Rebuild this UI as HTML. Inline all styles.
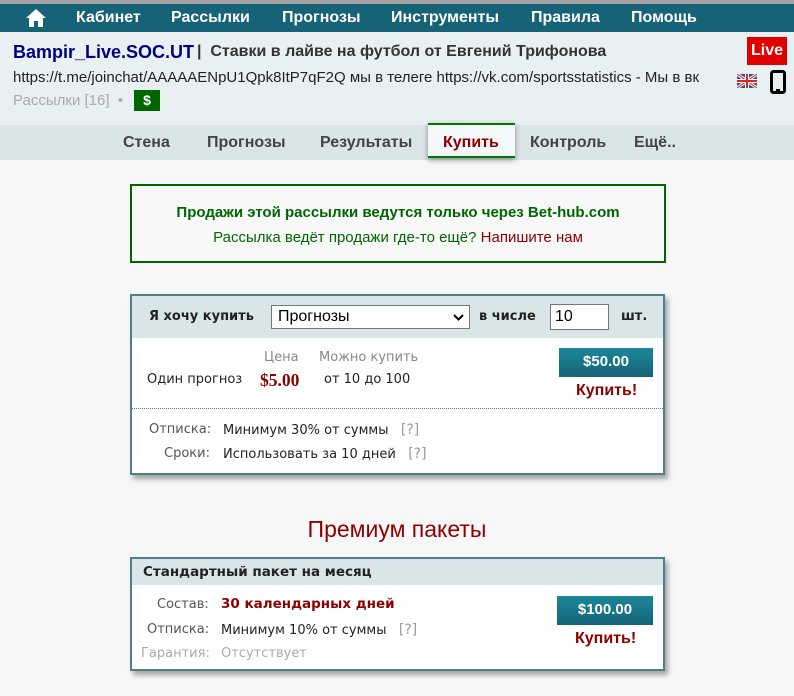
<!DOCTYPE html>
<html><head><meta charset="utf-8"><style>
*{box-sizing:border-box;margin:0;padding:0}
body{width:794px;height:696px;overflow:hidden;background:#f7f7f7;font-family:"Liberation Sans",Arial,sans-serif;position:relative}
.abs{position:absolute;white-space:nowrap}
#top{position:absolute;left:0;top:0;width:794px;height:4px;background:#a4a4a4}
#nav{position:absolute;left:0;top:4px;width:794px;height:28px;background:#166378}
#nav .i{position:absolute;top:5px;color:#fff;font-weight:bold;font-size:16px}
#hdr{position:absolute;left:0;top:32px;width:794px;height:93px;background:#e8f0f2}
#tabs{position:absolute;left:0;top:125px;width:794px;height:35px;background:#dae5e7}
.tab{position:absolute;top:9px;font-weight:bold;font-size:16px;color:#444}
.v{font-family:"DejaVu Sans",Verdana,sans-serif;font-size:13px}
.panel{position:absolute;left:130px;width:535px;border:2px solid #4d8088;background:#fff;box-shadow:3px 4px 5px rgba(0,0,0,.35)}
.btn{position:absolute;background:linear-gradient(#1b8798,#166378);color:#fff;font-weight:bold;font-size:15px;text-align:center;line-height:28px}
.buy{position:absolute;color:#8b0000;font-weight:bold;font-size:16px}
</style></head><body>
<div id="top"></div>
<div id="nav">
<svg style="position:absolute;left:25px;top:4px" width="22" height="20" viewBox="0 0 22 20"><path d="M11 1 L1 10 H4 V19 H9 V13 H13 V19 H18 V10 H21 Z" fill="#fff"/></svg>
<span class="i" style="left:76px">Кабинет</span>
<span class="i" style="left:171px">Рассылки</span>
<span class="i" style="left:282px">Прогнозы</span>
<span class="i" style="left:391px">Инструменты</span>
<span class="i" style="left:531px">Правила</span>
<span class="i" style="left:631px">Помощь</span>
</div>
<div id="hdr">
<span class="abs" style="left:13px;top:10px;font-size:18px;font-weight:bold;color:#000080">Bampir_Live.SOC.UT</span>
<span class="abs" style="left:197px;top:11px;font-size:16px;font-weight:bold;color:#333">|&nbsp; Ставки в лайве на футбол от Евгений Трифонова</span>
<span class="abs" style="left:13px;top:37px;font-size:15px;color:#222">https://t.me/joinchat/AAAAAENpU1Qpk8ItP7qF2Q мы в телеге https://vk.com/sportsstatistics - Мы в вк</span>
<span class="abs" style="left:13px;top:60px;font-size:15px;color:#aaa">Рассылки [16] &nbsp;•</span>
<div class="abs" style="left:134px;top:58px;width:26px;height:21px;background:#006600;color:#fff;font-weight:bold;font-size:14px;text-align:center;line-height:21px">$</div>
<div class="abs" style="left:747px;top:5px;width:40px;height:28px;background:#e00000;color:#fff;font-weight:bold;font-size:16px;text-align:center;line-height:28px">Live</div>
<svg style="position:absolute;left:737px;top:42px" width="20" height="14" viewBox="0 0 20 14"><rect width="20" height="14" fill="#3a4f9a"/><path d="M0 0L20 14M20 0L0 14" stroke="#fff" stroke-width="3"/><path d="M0 0L20 14M20 0L0 14" stroke="#d22" stroke-width="1"/><path d="M10 0V14M0 7H20" stroke="#fff" stroke-width="4"/><path d="M10 0V14M0 7H20" stroke="#d22" stroke-width="2"/></svg>
<svg style="position:absolute;left:770px;top:38px" width="16" height="24" viewBox="0 0 16 24"><rect x="1.5" y="1.5" width="13" height="21" rx="2" fill="none" stroke="#000" stroke-width="3"/><rect x="6" y="19" width="4" height="2" fill="#000"/></svg>
</div>
<div id="tabs">
<span class="tab" style="left:123px">Стена</span>
<span class="tab" style="left:207px">Прогнозы</span>
<span class="tab" style="left:320px">Результаты</span>
<div class="abs" style="left:428px;top:-2px;width:87px;height:35px;background:#f4f8f8;border-top:2px solid #007700;border-bottom:2px solid #007700;box-shadow:0 2px 5px rgba(0,0,0,.4)"><span class="tab" style="left:15px;top:9px;color:#8b0000">Купить</span></div>
<span class="tab" style="left:530px">Контроль</span>
<span class="tab" style="left:634px">Ещё..</span>
</div>
<div class="abs" style="left:130px;top:184px;width:536px;height:79px;border:2px solid #006600;background:#f8f8f8">
<div style="position:absolute;top:18px;width:100%;text-align:center;font-weight:bold;font-size:15px;color:#006600">Продажи этой рассылки ведутся только через Bet-hub.com</div>
<div style="position:absolute;top:43px;width:100%;text-align:center;font-size:15px;color:#006600">Рассылка ведёт продажи где-то ещё? <span style="color:#8b0000">Напишите нам</span></div>
</div>
<div class="panel" style="top:294px;height:181px">
<div style="height:42px;background:#dae5e7;position:relative">
<span class="abs v" style="left:17px;top:13px;font-weight:bold;color:#222">Я хочу купить</span>
<div class="abs" style="left:139px;top:9px;width:199px;height:24px;border:1px solid #767676;background:#fff;font-size:16px;padding:2px 6px">Прогнозы<svg style="position:absolute;right:5px;top:8px" width="11" height="7" viewBox="0 0 11 7"><path d="M1 1L5.5 5.5L10 1" stroke="#000" stroke-width="2" fill="none"/></svg></div>
<span class="abs v" style="left:347px;top:13px;font-weight:bold;color:#222">в числе</span>
<div class="abs" style="left:418px;top:8px;width:59px;height:26px;border:1px solid #767676;background:#fff;font-size:16px;padding:3px 4px">10</div>
<span class="abs v" style="left:489px;top:13px;font-weight:bold;color:#222">шт.</span>
</div>
<span class="abs v" style="left:132px;top:54px;color:#888">Цена</span>
<span class="abs v" style="left:187px;top:54px;color:#888">Можно купить</span>
<span class="abs v" style="left:15px;top:76px;color:#222">Один прогноз</span>
<span class="abs" style="left:128px;top:74px;font-family:'Liberation Serif',serif;font-weight:bold;font-size:17.5px;color:#8b0000">$5.00</span>
<span class="abs v" style="left:192px;top:76px;color:#222">от 10 до 100</span>
<div class="btn" style="left:427px;top:52px;width:94px;height:29px">$50.00</div>
<span class="buy" style="left:444px;top:86px">Купить!</span>
<div style="position:absolute;left:0;top:112px;width:100%;border-top:1px dotted #4d8088"></div>
<span class="abs v" style="left:17px;top:126px;color:#555">Отписка:</span>
<span class="abs v" style="left:91px;top:126px;color:#222">Минимум 30% от суммы&nbsp;&nbsp; <span style="color:#999;font-size:14px">[?]</span></span>
<span class="abs v" style="left:32px;top:150px;color:#555">Сроки:</span>
<span class="abs v" style="left:91px;top:150px;color:#222">Использовать за 10 дней&nbsp;&nbsp; <span style="color:#999;font-size:14px">[?]</span></span>
</div>
<div class="abs" style="left:0;top:516px;width:794px;text-align:center;font-size:23px;color:#8b0000">Премиум пакеты</div>
<div class="panel" style="top:557px;height:114px">
<div style="height:26px;background:#dae5e7;position:relative"><span class="abs v" style="left:11px;top:5px;font-weight:bold;color:#222;font-size:13.5px">Стандартный пакет на месяц</span></div>
<span class="abs v" style="left:25px;top:38px;color:#555">Состав:</span>
<span class="abs v" style="left:89px;top:37px;font-weight:bold;color:#8b0000;font-size:13.5px">30 календарных дней</span>
<span class="abs v" style="left:15px;top:63px;color:#555">Отписка:</span>
<span class="abs v" style="left:89px;top:63px;color:#222">Минимум 10% от суммы&nbsp;&nbsp; <span style="color:#999;font-size:14px">[?]</span></span>
<span class="abs v" style="left:9px;top:87px;color:#aaa">Гарантия:</span>
<span class="abs v" style="left:89px;top:87px;color:#aaa">Отсутствует</span>
<div class="btn" style="left:425px;top:37px;width:96px;height:29px">$100.00</div>
<span class="buy" style="left:443px;top:71px">Купить!</span>
</div>
</body></html>
